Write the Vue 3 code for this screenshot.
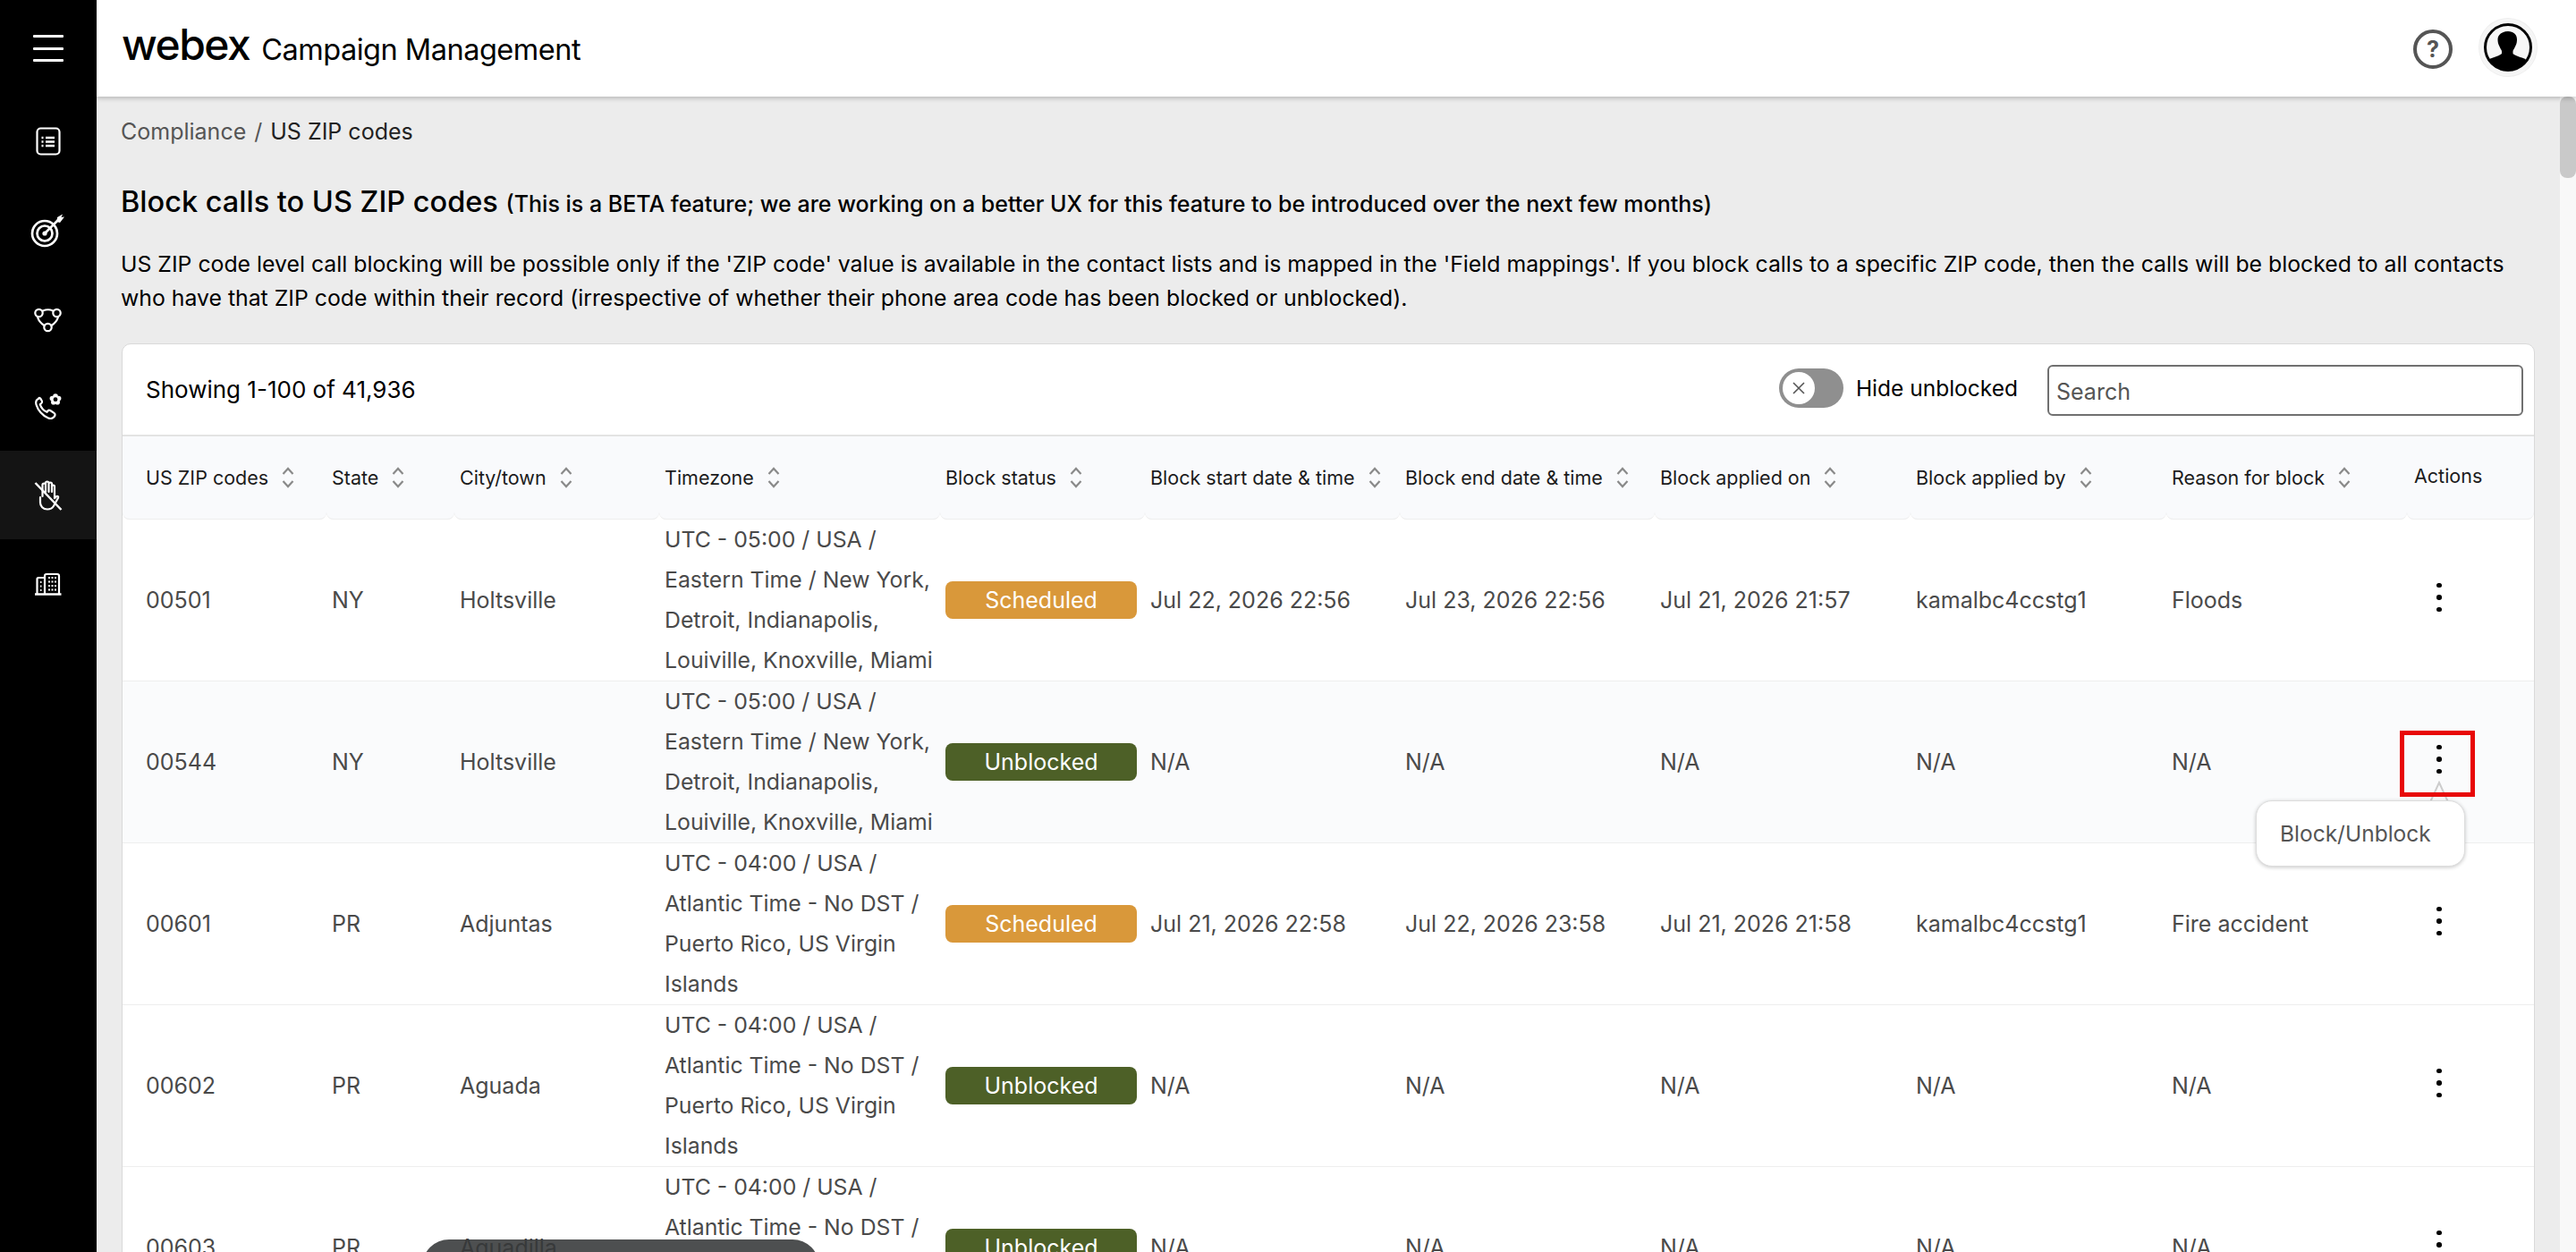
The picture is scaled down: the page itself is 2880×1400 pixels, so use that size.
<template>
  <div class="app">
    <aside class="sidebar">
      <div class="burger"><span></span><span></span><span></span></div>
      <div v-for="(item, i) in navItems" :key="item" :class="['nav-item', { active: i === 4 }]">
        <svg v-if="item === 'lists'" viewBox="0 0 40 40" class="nav-icon">
          <rect x="7.5" y="5.5" width="25" height="29" rx="4" />
          <path class="thick" d="M12.5 16h2M17 16h10M12.5 20.5h2M17 20.5h10M12.5 25h2M17 25h10" />
        </svg>
        <svg v-else-if="item === 'target'" viewBox="0 0 40 40" class="nav-icon heavy">
          <circle cx="16" cy="24" r="14" />
          <circle cx="16" cy="24" r="8.5" />
          <circle cx="16" cy="24" r="2.6" class="solid" />
          <path d="M16 24 32 8" />
          <path class="solid" d="M30 6l6-3.500-1.500 3.500 3.500-.5-5 6.500-3.500-1z" />
        </svg>
        <svg v-else-if="item === 'group'" viewBox="0 0 40 40" class="nav-icon">
          <circle cx="9.5" cy="14" r="4.2" />
          <circle cx="29.5" cy="14" r="4.2" />
          <circle cx="19.5" cy="30" r="4.2" />
          <path d="M14 11.5c3.500-1.500 8-1.500 11 0M8 18.500c1 3.500 3.500 7 7.500 9.500M31 18.500c-1 3.500-3.500 7-7.500 9.500" />
        </svg>
        <svg v-else-if="item === 'phone'" viewBox="0 0 40 40" class="nav-icon">
          <path d="M10 10.500c-3 1-4.500 3.500-3.500 7 1.800 6 7 12.500 13.500 15 3.500 1.300 6.500-.5 7.500-3 .4-1.200 0-2-1-2.700l-4.300-2.800c-1-.6-2-.4-2.700.5l-1 1.300c-3.500-1.500-6.500-5-7.800-8.700l1.500-1c.9-.6 1.100-1.600.7-2.600l-1.500-2.700c-.5-.8-1.400-1.100-1.900-.8z" />
          <g class="solid">
            <circle cx="28" cy="8" r="2.800" />
            <circle cx="31.600" cy="10.600" r="2.800" />
            <circle cx="30.200" cy="14.800" r="2.800" />
            <circle cx="25.800" cy="14.800" r="2.800" />
            <circle cx="24.400" cy="10.600" r="2.800" />
            <circle cx="28" cy="11.700" r="2.400" class="hole" />
          </g>
        </svg>
        <svg v-else-if="item === 'block'" viewBox="0 0 40 40" class="nav-icon">
          <path d="M11 22v6c0 4 3 7.500 8 7.500 3 0 5.500-1.300 7-3.800l5-9c.6-1.200-.6-2.500-2-1.500l-2 2V10c0-2-3-2-3 0v6-9c0-2-3.500-2-3.500 0v9-10c0-2-3.500-2-3.500 0v10-8c0-2-3.500-2-3.500 0v13" />
          <path d="M5.500 6l29 30" class="thick" />
        </svg>
        <svg v-else viewBox="0 0 40 40" class="nav-icon">
          <path d="M16 31V11c0-1.200.8-2 2-2h12c1.200 0 2 .8 2 2v20M16 13H9c-1 0-1.500.5-1.500 1.500V31" />
          <path class="thick" d="M5 31.500h29.500" />
          <path class="dots" d="M20 13h9M20 17.500h9M20 22h9M20 26.500h9M11 18h1.500M11 22.500h1.500M11 27h1.500" />
        </svg>
      </div>
    </aside>

    <div class="right">
      <header class="topbar">
        <div class="brand">
          <span class="logo">webex</span>
          <span class="product">Campaign Management</span>
        </div>
        <div class="top-actions">
          <div class="help">?</div>
          <div class="avatar">
            <svg viewBox="0 0 64 64" width="64" height="64">
              <defs>
                <clipPath id="avatarClip"><circle cx="32" cy="32" r="25" /></clipPath>
              </defs>
              <circle cx="32" cy="32" r="25.500" fill="#f7f7f7" stroke="#000" stroke-width="3" />
              <g clip-path="url(#avatarClip)">
                <path d="M32 14c6 0 10 3.500 10 9 0 3-.5 5-1.500 7-1 2.500-2.500 4.500-3 6v3c3 2.500 9 4 14 6l3 14H8l3-14c5-2 11-3.500 14-6v-3c-.5-1.500-2-3.500-3-6-1-2-1.500-4-1.500-7 0-5.500 5.500-9 11.500-9z" fill="#000" />
              </g>
            </svg>
          </div>
        </div>
      </header>

      <div class="body">
        <main class="main">
          <nav class="crumbs">
            <span class="crumb-link">Compliance</span>
            <span class="crumb-sep">/</span>
            <span>US ZIP codes</span>
          </nav>
          <h1 class="title">
            Block calls to US ZIP codes
            <small>(This is a BETA feature; we are working on a better UX for this feature to be introduced over the next few months)</small>
          </h1>
          <p class="desc">
            US ZIP code level call blocking will be possible only if the 'ZIP code' value is available in the contact lists and is mapped in the 'Field mappings'. If you block calls to a specific ZIP code, then the calls will be blocked to all contacts who have that ZIP code within their record (irrespective of whether their phone area code has been blocked or unblocked).
          </p>

          <section class="card">
            <div class="toolbar">
              <span class="count">Showing 1-100 of 41,936</span>
              <div class="toggle">
                <span class="knob">
                  <svg viewBox="0 0 16 16" width="16" height="16"><path d="M2 2l12 12M14 2 2 14" /></svg>
                </span>
              </div>
              <span class="toggle-label">Hide unblocked</span>
              <input class="search" placeholder="Search" />
            </div>

            <table class="grid">
              <colgroup>
                <col v-for="w in colWidths" :key="w.id" :style="{ width: w.px + 'px' }" />
              </colgroup>
              <thead>
                <tr>
                  <th v-for="col in columns" :key="col">
                    <span class="th-inner">
                      {{ col }}
                      <svg class="sort" viewBox="0 0 14 24" width="14" height="24">
                        <path d="M1.500 8 7 2l5.500 6M1.500 16 7 22l5.500-6" />
                      </svg>
                    </span>
                  </th>
                  <th class="actions-head">Actions</th>
                </tr>
              </thead>
              <tbody>
                <tr v-for="(row, i) in rows" :key="row.zip" :class="{ hovered: i === 1 }">
                  <td>{{ row.zip }}</td>
                  <td>{{ row.state }}</td>
                  <td>{{ row.city }}</td>
                  <td class="tz">{{ row.tz }}</td>
                  <td><span :class="['pill', row.status.toLowerCase()]">{{ row.status }}</span></td>
                  <td>{{ row.start || 'N/A' }}</td>
                  <td>{{ row.end || 'N/A' }}</td>
                  <td>{{ row.applied || 'N/A' }}</td>
                  <td>{{ row.by || 'N/A' }}</td>
                  <td>{{ row.reason || 'N/A' }}</td>
                  <td>
                    <div class="kebab">
                      <i></i><i></i><i></i>
                      <template v-if="i === 1">
                        <svg class="pop-arrow" viewBox="0 0 24 24" width="24" height="24">
                          <path d="M2 24 12 2l10 22" />
                        </svg>
                        <div class="highlight"></div>
                        <div class="popover">Block/Unblock</div>
                      </template>
                    </div>
                  </td>
                </tr>
              </tbody>
            </table>
          </section>
        </main>
        <div class="scrollbar"><div class="thumb"></div></div>
      </div>
    </div>
    <div class="toast"></div>
  </div>
</template>

<script setup>
const navItems = ["lists", "target", "group", "phone", "block", "building"];

const colWidths = [228, 143, 229, 314, 229, 285, 285, 286, 286, 269, 142].map((px, id) => ({ id, px }));

const columns = [
  "US ZIP codes",
  "State",
  "City/town",
  "Timezone",
  "Block status",
  "Block start date & time",
  "Block end date & time",
  "Block applied on",
  "Block applied by",
  "Reason for block",
];

const eastern = "UTC - 05:00 / USA / Eastern Time / New York, Detroit, Indianapolis, Louiville, Knoxville, Miami";
const atlantic = "UTC - 04:00 / USA / Atlantic Time - No DST / Puerto Rico, US Virgin Islands";

const rows = [
  {
    zip: "00501",
    state: "NY",
    city: "Holtsville",
    tz: eastern,
    status: "Scheduled",
    start: "Jul 22, 2026 22:56",
    end: "Jul 23, 2026 22:56",
    applied: "Jul 21, 2026 21:57",
    by: "kamalbc4ccstg1",
    reason: "Floods",
  },
  { zip: "00544", state: "NY", city: "Holtsville", tz: eastern, status: "Unblocked" },
  {
    zip: "00601",
    state: "PR",
    city: "Adjuntas",
    tz: atlantic,
    status: "Scheduled",
    start: "Jul 21, 2026 22:58",
    end: "Jul 22, 2026 23:58",
    applied: "Jul 21, 2026 21:58",
    by: "kamalbc4ccstg1",
    reason: "Fire accident",
  },
  { zip: "00602", state: "PR", city: "Aguada", tz: atlantic, status: "Unblocked" },
  { zip: "00603", state: "PR", city: "Aguadilla", tz: atlantic, status: "Unblocked" },
];
</script>

<style>
html,
body {
  margin: 0;
  overflow: hidden;
}
</style>

<style scoped>
.app {
  position: relative;
  display: flex;
  width: 2880px;
  height: 1400px;
  overflow: hidden;
  font-family: Inter, "Liberation Sans", sans-serif;
  font-size: 25px;
  color: #000;
  background: #ececec;
}

.sidebar {
  flex: 0 0 108px;
  background: #000;
}

.burger {
  height: 108px;
  box-sizing: border-box;
  padding: 39px 37px 0;
  display: flex;
  flex-direction: column;
  gap: 10.500px;
}

.burger span {
  height: 3px;
  background: #fff;
  border-radius: 1px;
}

.nav-item {
  height: 99px;
  display: flex;
  align-items: center;
  justify-content: center;
}

.nav-item.active {
  background: #141414;
}

.nav-icon {
  width: 40px;
  height: 40px;
  fill: none;
  stroke: #fff;
  stroke-width: 2.200;
  stroke-linecap: round;
  stroke-linejoin: round;
}

.nav-icon.heavy {
  stroke-width: 2.700;
}

.nav-icon .solid {
  fill: #fff;
  stroke: none;
}

.nav-icon .hole {
  fill: #000;
}

.nav-icon .thick {
  stroke-width: 2.500;
  stroke-linecap: butt;
}

.nav-icon .dots {
  stroke-width: 2;
  stroke-dasharray: 2 1.500;
  stroke-linecap: butt;
}

.right {
  flex: 1;
  min-width: 0;
  display: flex;
  flex-direction: column;
}

.topbar {
  flex: 0 0 108px;
  position: relative;
  z-index: 2;
  display: flex;
  align-items: center;
  justify-content: space-between;
  padding: 0 44px 0 28px;
  background: #fff;
  box-shadow: 0 2px 5px rgba(0, 0, 0, 0.22);
}

.brand {
  display: flex;
  align-items: baseline;
  gap: 13px;
  margin-top: -8px;
}

.logo {
  font-size: 48px;
  font-weight: 500;
  letter-spacing: -1.500px;
  line-height: 1;
}

.product {
  font-size: 32.500px;
  letter-spacing: -0.500px;
}

.top-actions {
  display: flex;
  align-items: center;
  gap: 30px;
}

.help {
  width: 44px;
  height: 44px;
  box-sizing: border-box;
  margin-top: 2px;
  border: 4px solid #555;
  border-radius: 50%;
  display: flex;
  align-items: center;
  justify-content: center;
  color: #555;
  font-size: 25px;
  font-weight: 700;
}

.avatar {
  width: 64px;
  height: 64px;
  border-radius: 50%;
  background: #f6f6f6;
  box-shadow: 0 0 0 1px #eee;
  margin-top: -3px;
}

.avatar svg {
  display: block;
}

.body {
  flex: 1;
  min-height: 0;
  display: flex;
}

.main {
  flex: 1;
  min-width: 0;
  padding: 23px 28px 0 27px;
}

.crumbs {
  display: flex;
  gap: 9px;
  line-height: 32px;
  color: #222;
}

.crumb-link,
.crumb-sep {
  color: #555;
}

.title {
  margin: 43px 0 0;
  font-size: 32.500px;
  font-weight: 500;
  line-height: 40px;
}

.title small {
  font-size: 25px;
  font-weight: 500;
}

.desc {
  margin: 28px 0 32px;
  font-size: 24.800px;
  line-height: 38px;
}

.card {
  margin-left: 1px;
  border: 1px solid #d9d9d9;
  border-radius: 10px;
  background: #fff;
}

.toolbar {
  height: 103px;
  box-sizing: border-box;
  display: flex;
  align-items: center;
  padding: 0 12px 0 26px;
  border-bottom: 2px solid #e3e3e3;
}

.count {
  margin-right: auto;
  font-size: 26px;
}

.toggle {
  width: 72px;
  height: 44px;
  box-sizing: border-box;
  padding: 4px;
  margin-bottom: 3px;
  border-radius: 22px;
  background: #8f8f8f;
}

.knob {
  width: 36px;
  height: 36px;
  display: flex;
  align-items: center;
  justify-content: center;
  border-radius: 50%;
  background: #fff;
}

.knob path {
  fill: none;
  stroke: #555;
  stroke-width: 1.600;
}

.toggle-label {
  margin: 0 33px 3px 14px;
  font-size: 24.500px;
}

.search {
  width: 532px;
  height: 57px;
  box-sizing: border-box;
  margin-top: 2px;
  padding: 2px 8px 0;
  border: 2px solid #707070;
  border-radius: 6px;
  font: inherit;
  outline: none;
}

.search::placeholder {
  color: #555;
  opacity: 1;
}

.grid {
  width: 100%;
  table-layout: fixed;
  border-collapse: separate;
  border-spacing: 0;
  color: #4a4a4a;
}

.grid thead tr {
  background: #ececec;
}

.grid th {
  height: 87px;
  padding: 0 0 1px 6px;
  text-align: left;
  font-size: 21.500px;
  font-weight: 400;
  color: #1c1c1c;
  background: #f9fafc;
  border-bottom: 1px solid #eee;
  border-radius: 0 0 8px 8px;
}

.grid th:first-child,
.grid td:first-child {
  padding-left: 26px;
}

.th-inner {
  display: inline-flex;
  align-items: center;
  gap: 15px;
}

.sort {
  flex: none;
  fill: none;
  stroke: #8a8a8a;
  stroke-width: 2.200;
}

.actions-head {
  padding-bottom: 5px !important;
  padding-left: 8px !important;
}

.grid td {
  height: 180px;
  padding: 0 0 0 6px;
  border-bottom: 1px solid #eee;
  vertical-align: middle;
  white-space: nowrap;
}

.grid td.tz {
  font-size: 24.800px;
  white-space: normal;
  line-height: 45px;
  overflow: visible;
}

.grid tr.hovered td {
  background: #fafbfc;
}

.pill {
  display: block;
  width: 214px;
  height: 42px;
  line-height: 42px;
  text-align: center;
  border-radius: 8px;
  color: #fff;
}

.pill.scheduled {
  background: #d9983a;
}

.pill.unblocked {
  background: #4d6027;
}

.kebab {
  position: relative;
  width: 58px;
  height: 48px;
  margin: 0 0 6px 1px;
  display: flex;
  flex-direction: column;
  align-items: center;
  justify-content: center;
  gap: 8px;
}

.kebab i {
  width: 5.500px;
  height: 5.500px;
  border-radius: 50%;
  background: #000;
}

.highlight {
  position: absolute;
  left: -15px;
  top: -8px;
  width: 84px;
  height: 74px;
  box-sizing: border-box;
  border: 5px solid #e80808;
}

.pop-arrow {
  position: absolute;
  left: 17px;
  top: 48px;
  fill: #fafbfc;
  stroke: #ccc;
  stroke-width: 2;
}

.popover {
  position: absolute;
  left: -176px;
  top: 70px;
  width: 234px;
  height: 74px;
  box-sizing: border-box;
  padding-left: 26px;
  font-size: 24.500px;
  line-height: 72px;
  border: 1px solid #ddd;
  border-radius: 18px;
  background: #fff;
  color: #555;
  box-shadow: 0 1px 4px rgba(0, 0, 0, 0.22);
}

.scrollbar {
  flex: 0 0 18px;
  background: #f8f8f8;
}

.thumb {
  height: 91px;
  border-radius: 8px;
  background: #c9c9c9;
}

.toast {
  position: absolute;
  left: 472px;
  top: 1386px;
  width: 444px;
  height: 60px;
  border-radius: 30px 30px 0 0;
  background: rgba(52, 55, 56, 0.88);
}
</style>
